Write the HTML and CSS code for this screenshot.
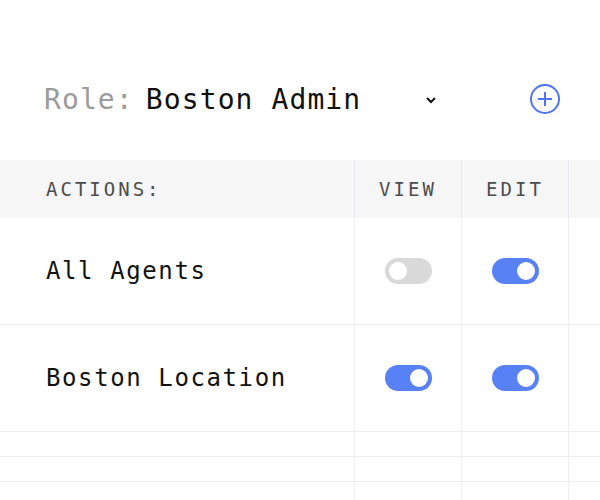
FILE: index.html
```html
<!DOCTYPE html>
<html>
<head>
    <title>Role Permissions</title>
    <link rel="stylesheet" href="styles.css">
</head>
<body>
    <div class="role-bar">
        <div class="role-select">
            <span class="role-label">Role:</span>
            <span class="role-name">Boston Admin</span>
            <svg class="chevron" width="12" height="8" viewBox="0 0 12 8">
                <path d="M2 2 L6 6 L10 2" fill="none" stroke="#111" stroke-width="2"/>
            </svg>
        </div>
        <button class="add-role" aria-label="Add role">
            <svg width="32" height="32" viewBox="0 0 32 32">
                <circle cx="16" cy="16" r="14" fill="none" stroke="#4f74f0" stroke-width="2"/>
                <path d="M16 9 V23 M9 16 H23" stroke="#4f74f0" stroke-width="2"/>
            </svg>
        </button>
    </div>

    <div class="perm-grid">
        <div class="cell head">ACTIONS:</div>
        <div class="cell head center">VIEW</div>
        <div class="cell head center">EDIT</div>
        <div class="cell head"></div>

        <div class="cell name">All Agents</div>
        <div class="cell center"><span class="toggle"></span></div>
        <div class="cell center"><span class="toggle on"></span></div>
        <div class="cell"></div>

        <div class="cell name">Boston Location</div>
        <div class="cell center"><span class="toggle on"></span></div>
        <div class="cell center"><span class="toggle on"></span></div>
        <div class="cell"></div>

        <div class="cell empty"></div>
        <div class="cell empty"></div>
        <div class="cell empty"></div>
        <div class="cell empty"></div>

        <div class="cell empty"></div>
        <div class="cell empty"></div>
        <div class="cell empty"></div>
        <div class="cell empty"></div>

        <div class="cell empty"></div>
        <div class="cell empty"></div>
        <div class="cell empty"></div>
        <div class="cell empty"></div>
    </div>
</body>
</html>
```

FILE: styles.css
```css
:root {
    --text-color: #111111;
    --muted-color: #9b9b9b;
    --head-text: #4d4d4d;
    --head-bg: #f6f6f6;
    --line-color: #eeeeee;
    --col-line: #eeeff3;
    --head-col-line: #e4e7f0;
    --blue: #5781f5;
    --off-color: #d9d9d9;
}

body {
    margin: 0;
    font-family: 'DejaVu Sans Mono', 'Liberation Mono', monospace;
    color: var(--text-color);
    background: #ffffff;
    overflow: hidden;
}

.role-bar {
    height: 160px;
    display: flex;
    align-items: center;
    justify-content: space-between;
    padding: 38px 39px 0 44px;
    box-sizing: border-box;
}

.role-select {
    display: flex;
    align-items: center;
    font-size: 28px;
    letter-spacing: 1.1px;
}

.role-label {
    color: var(--muted-color);
    margin-right: 12px;
}

.role-name {
    color: var(--text-color);
}

.chevron {
    margin-left: 64px;
    margin-top: 2px;
}

.add-role {
    border: none;
    background: none;
    padding: 0;
    display: flex;
    cursor: pointer;
}

.perm-grid {
    display: grid;
    grid-template-columns: 355px 107px 107px 1fr;
}

.cell {
    border-right: 1px solid var(--col-line);
    border-bottom: 1px solid var(--line-color);
    height: 106px;
    display: flex;
    align-items: center;
}

.cell:nth-child(4n) {
    border-right: none;
}

.head {
    height: 58px;
    background: var(--head-bg);
    border-bottom: none;
    border-right-color: var(--head-col-line);
    color: var(--head-text);
    font-size: 19px;
    letter-spacing: 3px;
}

.cell:first-child {
    padding-left: 46px;
}

.name {
    padding-left: 46px;
    font-size: 24px;
    letter-spacing: 1.6px;
}

.center {
    justify-content: center;
}

.empty {
    height: 24px;
}

.toggle {
    width: 47px;
    height: 26px;
    border-radius: 13px;
    background: var(--off-color);
    position: relative;
}

.toggle::after {
    content: "";
    position: absolute;
    top: 4px;
    left: 4px;
    width: 18px;
    height: 18px;
    border-radius: 50%;
    background: #ffffff;
}

.toggle.on {
    background: var(--blue);
}

.toggle.on::after {
    left: 25px;
}
```
